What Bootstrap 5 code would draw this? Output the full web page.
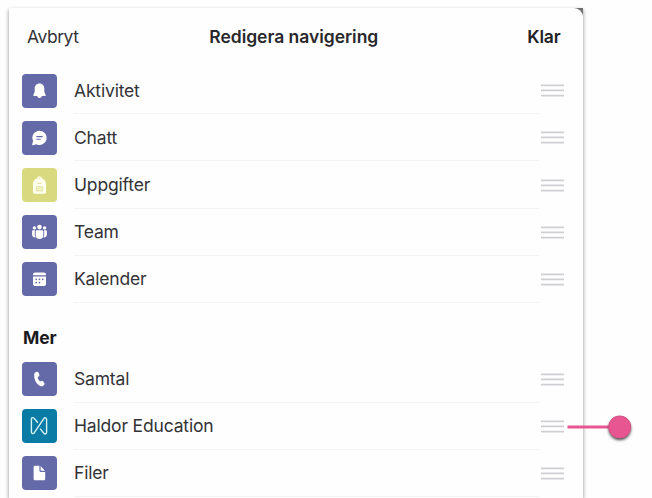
<!DOCTYPE html>
<html lang="sv">
<head>
<meta charset="utf-8">
<meta name="viewport" content="width=device-width, initial-scale=1">
<title>Redigera navigering</title>
<link href="https://cdn.jsdelivr.net/npm/bootstrap@5.3.0/dist/css/bootstrap.min.css" rel="stylesheet">
<style>
body{font-family:Inter,"Liberation Sans",sans-serif;font-size:17.5px;letter-spacing:-.17px;line-height:24px;color:#333236;background:#fefefe;height:498px;overflow:hidden}
.sheet-back{width:573.5px;height:490px;margin:8px 0 0 9px;background:linear-gradient(90deg,#fff 50%,#6e6e6e 50%);box-shadow:0 2px 4px rgba(0,0,0,.45)}
.sheet{height:100%;background:#fefefe;border-radius:3px 9px 0 0}
.sheet-head{height:59.3px;padding:0 22px 1px 18px}
.sheet-head>*{flex:1 1 0}
.sheet-head .cancel{letter-spacing:-.45px}
.sheet-head h1{font-size:17.5px;letter-spacing:-.03px;flex:0 0 auto;color:#29282c}
.done{color:#222126}
.app-row{height:47.1px;padding-left:13px}
.tile{width:35px;height:34px;border-radius:4px;background:#6469a7;margin-right:17px}
.tile-lime{background:#d9da80}
.tile-teal{background:#0a7ba5}
.tile svg{width:35px;height:34px;display:block}
.label-line{width:464.5px;padding-top:1px;border-bottom:1.5px solid #f3f3f4}
.grip{width:23px;height:13px;margin-left:2.5px;flex:none}
.more-title{height:52.8px;padding:23.6px 0 0 14px;font-size:17.5px;line-height:24px;color:#1b1b1e}
.pointer{left:567px;top:412px}
</style>
<script src="https://cdn.jsdelivr.net/npm/bootstrap@5.3.0/dist/js/bootstrap.bundle.min.js"></script>
</head>
<body>
<svg class="d-none">
<symbol id="grip" viewBox="0 0 23 13"><path d="M0 1.3h23M0 6.4h23M0 11.6h23" stroke="#d0ced3" stroke-width="1.7"/></symbol>
</svg>
<main class="sheet-back">
<div class="sheet">
<header class="sheet-head d-flex align-items-center">
<span class="cancel">Avbryt</span><h1 class="m-0 fw-semibold lh-base">Redigera navigering</h1><span class="done fw-semibold text-end">Klar</span>
</header>
<section>
<div class="app-row d-flex align-items-center"><div class="tile"><svg viewBox="0 0 35 34"><path fill="#fff" d="M17.5 9.5c-3 0-4.8 2.2-4.8 5.1v3.2l-1.4 3.2c-.2.5 0 .9.6.9h3.2c.3 1.2 1.2 2 2.4 2s2.1-.8 2.4-2h3.2c.6 0 .8-.4.6-.9l-1.4-3.2v-3.2c0-2.9-1.8-5.1-4.8-5.1z"/></svg></div><div class="label-line align-self-stretch d-flex align-items-center">Aktivitet</div><svg class="grip"><use href="#grip"/></svg></div>
<div class="app-row d-flex align-items-center"><div class="tile"><svg viewBox="0 0 35 34"><path fill="#fff" d="M17.6 9.8a7.1 7.1 0 1 1-3.2 13.4l-3.7 1c-.4.1-.7-.2-.6-.6l1-3.5A7.1 7.1 0 0 1 17.6 9.8z"/><path d="M14.8 15.6h5.5M14.8 18.3h3.5" stroke="#6469a7" stroke-width="1.1" stroke-linecap="round"/></svg></div><div class="label-line align-self-stretch d-flex align-items-center">Chatt</div><svg class="grip"><use href="#grip"/></svg></div>
<div class="app-row d-flex align-items-center"><div class="tile tile-lime"><svg viewBox="0 0 35 34"><path fill="#fffff0" d="M15.2 10.3c.2-1.3 1-2 2.3-2s2.1.7 2.3 2c2.5 1 4.2 3.2 4.2 6v7.7c0 1-.7 1.7-1.7 1.7h-9.6c-1 0-1.7-.7-1.7-1.7v-7.7c0-2.8 1.7-5 4.2-6z"/><path d="M16.4 10.2h2.2M15.5 15.3h4M14.3 18.9h6.4v3.9h-6.4zM15.5 20.8h4" fill="none" stroke="#d9da80" stroke-width=".9"/></svg></div><div class="label-line align-self-stretch d-flex align-items-center">Uppgifter</div><svg class="grip"><use href="#grip"/></svg></div>
<div class="app-row d-flex align-items-center"><div class="tile"><svg viewBox="0 0 35 34" fill="#fff"><circle cx="17.5" cy="12.1" r="2.3"/><circle cx="12.4" cy="12.9" r="1.7"/><circle cx="22.6" cy="12.9" r="1.7"/><path d="M14.5 15.3h6c.5 0 .8.3.8.8v4.1a3.8 3.8 0 0 1-7.6 0v-4.1c0-.5.3-.8.8-.8zM11 15.3h2c-.3 2.4-.5 5.2.5 7.1-2.4.2-3.4-1.4-3.4-3.2v-3c0-.6.3-.9.9-.9zM22 15.3h2c.6 0 .9.3.9.9v3c0 1.8-1 3.4-3.4 3.2 1-1.9.8-4.7.5-7.1z"/></svg></div><div class="label-line align-self-stretch d-flex align-items-center">Team</div><svg class="grip"><use href="#grip"/></svg></div>
<div class="app-row d-flex align-items-center"><div class="tile"><svg viewBox="0 0 35 34"><path fill="#fff" d="M11 13.3v-.5c0-1.4 1-2.3 2.3-2.3h8.4c1.4 0 2.3.9 2.3 2.3v.5zM11 14.5h13v7.2c0 1.4-.9 2.3-2.3 2.3h-8.4c-1.3 0-2.3-.9-2.3-2.3z"/><g fill="#6469a7"><circle cx="14.2" cy="17.3" r=".85"/><circle cx="17.5" cy="17.3" r=".85"/><circle cx="20.8" cy="17.3" r=".85"/><circle cx="14.2" cy="20.6" r=".85"/><circle cx="17.5" cy="20.6" r=".85"/></g></svg></div><div class="label-line align-self-stretch d-flex align-items-center">Kalender</div><svg class="grip"><use href="#grip"/></svg></div>
</section>
<h2 class="more-title m-0 fw-bold">Mer</h2>
<section>
<div class="app-row d-flex align-items-center"><div class="tile"><svg viewBox="0 0 35 34"><path fill="#fff" d="M13.5 10.2l1.2-.4c.8-.2 1.5.1 1.8.8l.8 1.9c.3.7.1 1.3-.4 1.7l-1.2 1.1c.2 1.6 1.1 3.1 2.3 4.1l1.6-.5c.7-.2 1.2.1 1.6.6l1.1 1.6c.4.6.3 1.3-.2 1.8l-.9.8c-.9.8-2 .8-3 .3-3.4-1.6-6.1-6-6-10.5 0-1.7.2-2.9 1.3-3.3z"/></svg></div><div class="label-line align-self-stretch d-flex align-items-center">Samtal</div><svg class="grip"><use href="#grip"/></svg></div>
<div class="app-row d-flex align-items-center"><div class="tile tile-teal"><svg viewBox="0 0 35 34"><path fill="none" stroke="#d5f1f2" stroke-width="1.4" stroke-linejoin="round" stroke-linecap="round" d="M15.4 13.3l-3.2-3.9c-1.2-1.4-2.8-.8-2.8.9v12.6c0 1.9 2 2.3 3 .7l9.2-13.8c1-1.6 3-1.1 3 .7v12.8c0 1.7-1.7 2.2-2.8.9l-3.3-4.1"/></svg></div><div class="label-line align-self-stretch d-flex align-items-center">Haldor Education</div><svg class="grip"><use href="#grip"/></svg></div>
<div class="app-row d-flex align-items-center"><div class="tile"><svg viewBox="0 0 35 34" fill="#fff"><path d="M13.2 9.8h4.2v4.5c0 1.1.7 1.8 1.8 1.8h4v6.6c0 1-.6 1.6-1.6 1.6h-8.4c-1 0-1.6-.6-1.6-1.6V11.4c0-1 .6-1.6 1.6-1.6z"/><path d="M18.6 10.1l4.3 4.7h-3.5c-.5 0-.8-.3-.8-.8z"/></svg></div><div class="label-line align-self-stretch d-flex align-items-center">Filer</div><svg class="grip"><use href="#grip"/></svg></div>
</section>
</div>
</main>
<svg class="pointer position-absolute" width="75" height="36" viewBox="0 0 75 36">
<defs><filter id="drop" x="-50%" y="-50%" width="200%" height="200%"><feDropShadow dx="0" dy="2" stdDeviation="1.6" flood-opacity=".75"/></filter></defs>
<path d="M.5 15H42" stroke="#e75690" stroke-width="2.8"/>
<circle cx="52.7" cy="15" r="11" fill="#e75690" filter="url(#drop)"/>
<circle cx="52.7" cy="15" r="11.2" fill="#e75690" stroke="#b84d76" stroke-width=".5"/>
</svg>
</body>
</html>
